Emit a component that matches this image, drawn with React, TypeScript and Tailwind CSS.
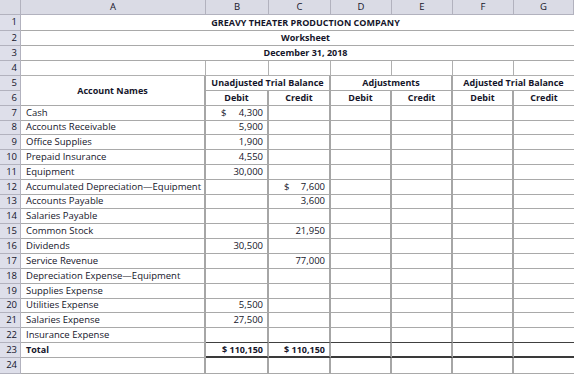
import React from "react";

type R = { n: number; name: string; b?: string; c?: string; bDollar?: boolean; cDollar?: boolean };

const rows: R[] = [
  { n: 7, name: "Cash", b: "4,300", bDollar: true },
  { n: 8, name: "Accounts Receivable", b: "5,900" },
  { n: 9, name: "Office Supplies", b: "1,900" },
  { n: 10, name: "Prepaid Insurance", b: "4,550" },
  { n: 11, name: "Equipment", b: "30,000" },
  { n: 12, name: "Accumulated Depreciation\u2014Equipment", c: "7,600", cDollar: true },
  { n: 13, name: "Accounts Payable", c: "3,600" },
  { n: 14, name: "Salaries Payable" },
  { n: 15, name: "Common Stock", c: "21,950" },
  { n: 16, name: "Dividends", b: "30,500" },
  { n: 17, name: "Service Revenue", c: "77,000" },
  { n: 18, name: "Depreciation Expense\u2014Equipment" },
  { n: 19, name: "Supplies Expense" },
  { n: 20, name: "Utilities Expense", b: "5,500" },
  { n: 21, name: "Salaries Expense", b: "27,500" },
  { n: 22, name: "Insurance Expense" },
];

function RowNum({ n }: { n: number | string }) {
  return (
    <div className="bg-[#dedfea] border-r border-b border-[#b2b2be] flex items-center justify-end pr-[3px] text-[9.5px] text-[#15152a]">
      {n}
    </div>
  );
}

function Num({ v, dollar, last }: { v?: string; dollar?: boolean; last?: boolean }) {
  return (
    <div
      className={
        last
          ? "border-b border-b-[#a9a9a9] flex items-center justify-between pl-[15px] pr-[4px] text-[9.5px]"
          : "border-r-2 border-b border-r-[#a6a6a6] border-b-[#a9a9a9] flex items-center justify-between pl-[15px] pr-[4px] text-[9.5px]"
      }
    >
      <span>{dollar ? "$" : ""}</span>
      <span>{v ?? ""}</span>
    </div>
  );
}

function Empty({ last, dark }: { last?: boolean; dark?: boolean }) {
  if (dark) {
    return (
      <div className={last ? "border-b border-b-[#404040]" : "border-r-2 border-b border-r-[#a6a6a6] border-b-[#404040]"} />
    );
  }
  return <div className={last ? "border-b border-b-[#a9a9a9]" : "border-r-2 border-b border-r-[#a6a6a6] border-b-[#a9a9a9]"} />;
}

export default function App() {
  return (
    <div className="w-[574px] h-[374px] overflow-hidden bg-white font-['Open_Sans',sans-serif] text-[#15152a]">
      <div className="grid grid-cols-[21px_185px_63px_62px_61px_61px_61px_60px] grid-rows-[15px_16px_15px_15px_15px_15px_15px_15px_14px_15px_15px_15px_15px_14px_15px_15px_15px_15px_15px_15px_14px_15px_15px_15px_16px]">
        {/* header */}
        <div className="bg-[#dadbe5] border-r border-b border-[#b2b2be]" />
        {["A", "B", "C", "D", "E", "F", "G"].map((l) => (
          <div
            key={l}
            className="bg-[#dadbe5] border-r border-b border-[#b2b2be] flex items-center justify-center text-[9.5px]"
          >
            {l}
          </div>
        ))}

        {/* title rows */}
        <RowNum n={1} />
        <div className="col-span-7 border-b border-[#a9a9a9] flex items-center justify-center pl-[16px] text-[9px] font-bold">
          GREAVY THEATER PRODUCTION COMPANY
        </div>
        <RowNum n={2} />
        <div className="col-span-7 border-b border-[#a9a9a9] flex items-center justify-center pl-[16px] text-[9px] font-bold">
          Worksheet
        </div>
        <RowNum n={3} />
        <div className="col-span-7 border-b border-[#a9a9a9] flex items-center justify-center pl-[16px] text-[9px] font-bold">
          December 31, 2018
        </div>

        {/* row 4 */}
        <RowNum n={4} />
        <div className="border-r border-b border-[#b0b0b0]" />
        <div className="border-r border-b border-[#b0b0b0]" />
        <div className="border-r border-b border-[#b0b0b0]" />
        <div className="border-r border-b border-[#b0b0b0]" />
        <div className="border-r border-b border-[#b0b0b0]" />
        <div className="border-r border-b border-[#b0b0b0]" />
        <div className="border-b border-[#b0b0b0]" />

        {/* row 5 */}
        <RowNum n={5} />
        <div className="row-span-2 border-r-2 border-b border-r-[#a6a6a6] border-b-[#a9a9a9] flex items-center justify-center text-[9px] font-bold">
          Account Names
        </div>
        <div className="col-span-2 border-r-2 border-b border-r-[#a6a6a6] border-b-[#a9a9a9] flex items-center justify-center text-[9px] font-bold">
          Unadjusted Trial Balance
        </div>
        <div className="col-span-2 border-r-2 border-b border-r-[#a6a6a6] border-b-[#a9a9a9] flex items-center justify-center text-[9px] font-bold">
          Adjustments
        </div>
        <div className="col-span-2 border-b border-b-[#a9a9a9] flex items-center justify-center text-[9px] font-bold">
          Adjusted Trial Balance
        </div>

        {/* row 6 */}
        <RowNum n={6} />
        {["Debit", "Credit", "Debit", "Credit", "Debit", "Credit"].map((t, i) => (
          <div
            key={i}
            className={
              i === 5
                ? "border-b border-b-[#a9a9a9] flex items-center justify-center text-[9px] font-bold"
                : "border-r-2 border-b border-r-[#a6a6a6] border-b-[#a9a9a9] flex items-center justify-center text-[9px] font-bold"
            }
          >
            {t}
          </div>
        ))}

        {/* data rows */}
        {rows.map((r) => {
          const dark = r.n === 22;
          return (
            <React.Fragment key={r.n}>
              <RowNum n={r.n} />
              <div className="border-r-2 border-b border-r-[#a6a6a6] border-b-[#a9a9a9] flex items-center pl-[5px] text-[9.5px] whitespace-nowrap">
                {r.name}
              </div>
              {dark ? (
                <>
                  <Empty dark />
                  <Empty dark />
                  <Empty dark />
                  <Empty dark />
                  <Empty dark />
                  <Empty dark last />
                </>
              ) : (
                <>
                  <Num v={r.b} dollar={r.bDollar} />
                  <Num v={r.c} dollar={r.cDollar} />
                  <Empty />
                  <Empty />
                  <Empty />
                  <Empty last />
                </>
              )}
            </React.Fragment>
          );
        })}

        {/* total row */}
        <RowNum n={23} />
        <div className="border-r-2 border-b border-r-[#a6a6a6] border-b-[#a9a9a9] flex items-center pl-[5px] text-[9px] font-bold">
          Total
        </div>
        <div className="border-r-2 border-b-2 border-r-[#a6a6a6] border-b-[#3a3a3a] flex items-center justify-end pr-[4px] text-[9px] font-bold">
          $ 110,150
        </div>
        <div className="border-r-2 border-b-2 border-r-[#a6a6a6] border-b-[#3a3a3a] flex items-center justify-end pr-[4px] text-[9px] font-bold">
          $ 110,150
        </div>
        <div className="border-r-2 border-b-2 border-r-[#a6a6a6] border-b-[#3a3a3a]" />
        <div className="border-r-2 border-b-2 border-r-[#a6a6a6] border-b-[#3a3a3a]" />
        <div className="border-r-2 border-b-2 border-r-[#a6a6a6] border-b-[#3a3a3a]" />
        <div className="border-b-2 border-b-[#3a3a3a]" />

        {/* row 24 */}
        <RowNum n={24} />
        <div className="border-r-2 border-b border-r-[#a6a6a6] border-b-[#a9a9a9]" />
        <Empty />
        <Empty />
        <Empty />
        <Empty />
        <Empty />
        <Empty last />
      </div>
    </div>
  );
}
